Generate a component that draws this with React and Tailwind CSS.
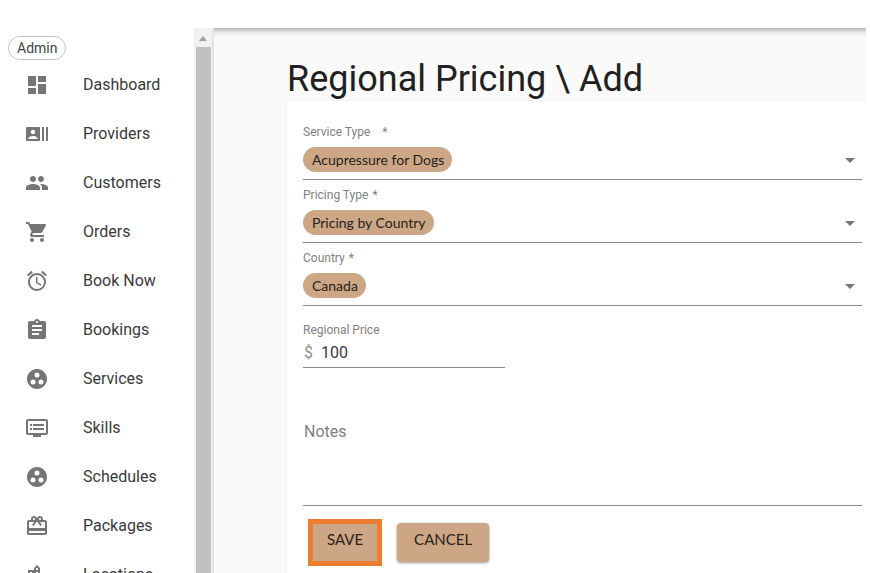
import {
  MdDashboard,
  MdRecentActors,
  MdPeople,
  MdAccessAlarm,
  MdAssignment,
  MdGroupWork,
  MdDvr,
  MdCardGiftcard,
  MdLocationCity,
  MdArrowDropDown,
} from 'react-icons/md';

function CartIcon({ className }) {
  return (
    <svg className={className} viewBox="0 0 24 24" fill="currentColor">
      <circle cx="7" cy="20" r="2" />
      <circle cx="17" cy="20" r="2" />
      <path d="M1 2v2h2l3.6 7.59-1.35 2.45c-.16.28-.25.61-.25.96 0 1.1.9 2 2 2h12v-2H7.42c-.14 0-.25-.11-.25-.25l.03-.12L8.1 13h7.45c.75 0 1.41-.41 1.75-1.03L20.88 5.48c.08-.14.12-.31.12-.48 0-.55-.45-1-1-1H5.21L4.27 2H1z" />
    </svg>
  );
}

const MENU = [
  { label: 'Dashboard', icon: MdDashboard },
  { label: 'Providers', icon: MdRecentActors },
  { label: 'Customers', icon: MdPeople },
  { label: 'Orders', icon: CartIcon },
  { label: 'Book Now', icon: MdAccessAlarm },
  { label: 'Bookings', icon: MdAssignment },
  { label: 'Services', icon: MdGroupWork },
  { label: 'Skills', icon: MdDvr },
  { label: 'Schedules', icon: MdGroupWork },
  { label: 'Packages', icon: MdCardGiftcard },
  { label: 'Locations', icon: MdLocationCity },
];

function Sidebar() {
  return (
    <nav className="w-[194px] shrink-0 overflow-hidden pt-2">
      <span className="ml-2 flex h-6 w-fit items-center rounded-full border border-[#c4c4c4] px-2 text-sm text-[#444]">
        Admin
      </span>
      <ul>
        {MENU.map(({ label, icon: Icon }) => (
          <li key={label}>
            <a href="#" className="flex h-[49px] items-center gap-[34px] pl-[25px] text-base text-[#3a3a3a]">
              <Icon className="size-6 shrink-0 text-[#757575]" />
              {label}
            </a>
          </li>
        ))}
      </ul>
    </nav>
  );
}

function ScrollTrack() {
  return (
    <div className="flex w-5 shrink-0 flex-col items-center border-r-2 border-[#e4e4e4] bg-[#f1f1f1]" aria-hidden="true">
      <svg className="h-[19px] w-2" viewBox="0 0 8 19">
        <path d="M0 13L4 8L8 13Z" fill="#a0a0a0" />
      </svg>
      <div className="w-[15px] flex-1 bg-[#c1c1c1]" />
    </div>
  );
}

function ChipSelect({ id, label, value, wide }) {
  return (
    <div className="border-b border-[#8c8c8c] pb-[7px]">
      <label htmlFor={id} className={`flex h-[30px] items-center text-xs text-[#808080] ${wide ? 'gap-3' : 'gap-1'}`}>
        {label}
        <span>*</span>
      </label>
      <div className="flex items-center justify-between">
        <select
          id={id}
          defaultValue={value}
          className="field-sizing-content h-[25px] appearance-none rounded-full bg-[#cda785] pr-2 pl-[9px] font-[Lato,sans-serif] text-sm text-[#222]"
        >
          <option>{value}</option>
        </select>
        <MdArrowDropDown className="-my-1 size-6 text-[#757575]" />
      </div>
    </div>
  );
}

export default function App() {
  return (
    <div className="flex h-screen overflow-hidden bg-white pt-7 pr-1 font-[Roboto,sans-serif]">
      <Sidebar />
      <ScrollTrack />

      <main className="min-w-0 flex-1 overflow-hidden bg-[#fafafa] pl-[73px] shadow-[inset_0_8px_6px_-6px_rgba(0,0,0,0.35)]">
        <h1 className="pt-[29px] text-4xl leading-[44px] text-[#212121]">Regional Pricing \ Add</h1>

        <form className="min-h-full rounded-l bg-white pt-4 pr-1 pl-4 shadow-[0_0_2px_rgba(0,0,0,0.12)]">
          <ChipSelect id="service-type" label="Service Type" value="Acupressure for Dogs" wide />
          <ChipSelect id="pricing-type" label="Pricing Type" value="Pricing by Country" />
          <ChipSelect id="country" label="Country" value="Canada" />

          {/* Price */}
          <div className="mt-3 w-[202px] border-b border-[#8c8c8c] pb-[2px]">
            <label htmlFor="price" className="flex h-[23px] items-center text-xs text-[#808080]">
              Regional Price
            </label>
            <div className="flex h-6 items-center gap-2 pl-px text-base">
              <span className="text-[#8c8c8c]">$</span>
              <input id="price" defaultValue="100" className="min-w-0 flex-1 text-[#3a3a3a] outline-none" />
            </div>
          </div>

          <textarea
            aria-label="Notes"
            placeholder="Notes"
            className="mt-12 block h-[90px] w-full resize-none border-b border-[#8c8c8c] pt-1 pl-px text-base outline-none placeholder:text-[#808080]"
          />

          {/* Actions */}
          <div className="mt-[13px] ml-[5px] flex items-center gap-[15px] font-[Lato,sans-serif] text-[15px] text-[#2b2118]">
            <div className="border-[5px] border-[#ed7d31]">
              <button type="submit" className="block h-[37px] bg-[#cda785] px-[14px] pb-1.5">
                SAVE
              </button>
            </div>
            <button
              type="button"
              className="h-[39px] rounded bg-[#cda785] px-[17px] pb-1.5 shadow-[0_1px_3px_rgba(0,0,0,0.4)]"
            >
              CANCEL
            </button>
          </div>
        </form>
      </main>
    </div>
  );
}
